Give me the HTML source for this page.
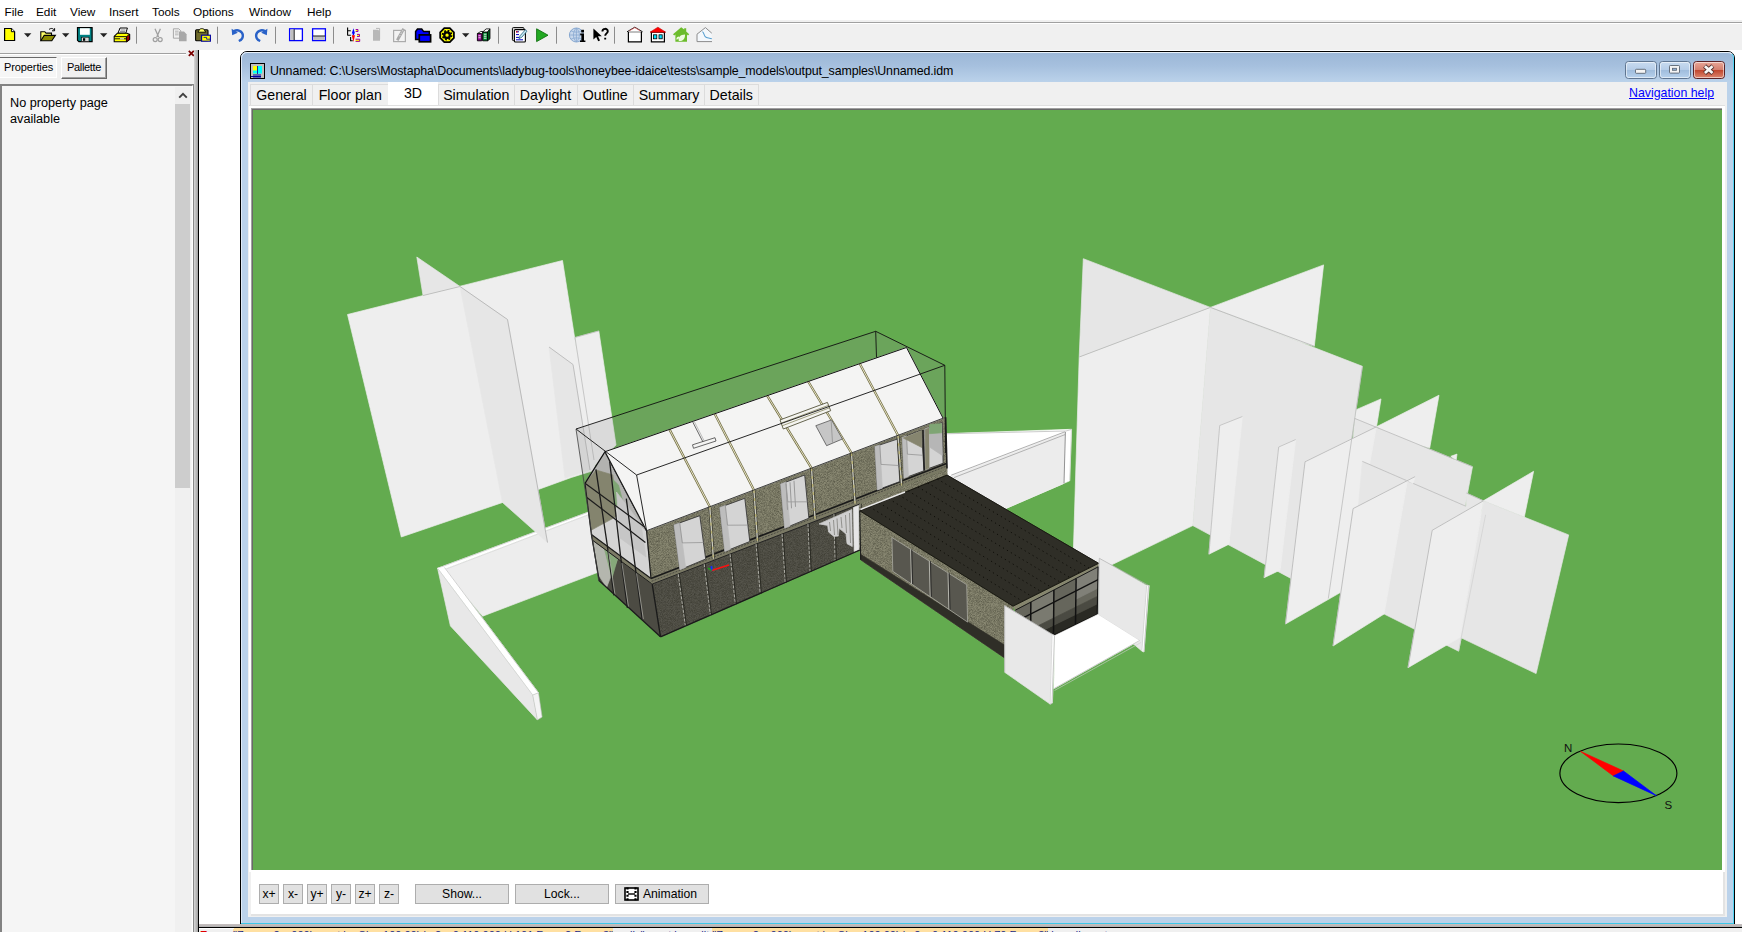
<!DOCTYPE html>
<html><head><meta charset="utf-8"><title>IDA ICE</title>
<style>
*{box-sizing:border-box;margin:0;padding:0}
html,body{width:1742px;height:932px;overflow:hidden;background:#fff}
body{position:relative;font-family:"Liberation Sans",sans-serif;color:#000}
.abs{position:absolute}
#menubar{left:0;top:0;width:1742px;height:20px;background:#fff}
#menubar span{position:absolute;top:5px;font-size:11.8px;line-height:15px;white-space:nowrap}
#toolbar{left:0;top:20px;width:1742px;height:30px;background:#f0f0f0;border-top:2px solid #f0f0f0}
#toolbar:before{content:'';position:absolute;left:0;top:0;width:100%;height:1px;background:#a0a0a0}
#toolbar:after{content:'';position:absolute;left:0;top:1px;width:100%;height:1px;background:#fff}
#tbicons{left:0;top:21px;width:720px;height:29px}
#leftpanel{left:0;top:50px;width:194px;height:882px;background:#f0f0f0}
#lp-line{left:0;top:53px;width:186px;height:1px;background:#a0a0a0}
#lp-line2{left:0;top:54px;width:186px;height:1px;background:#fff}
#lp-x{left:188px;top:47px;font-size:9px;font-weight:bold;color:#7a0000;line-height:12px}
#tab-prop{left:-1px;top:57px;width:58px;height:21px;border:1px solid;border-color:#696969 #fff #fff #696969;background:#f6f6f6;font-size:11px;line-height:19px;padding-left:4px;white-space:nowrap;letter-spacing:-0.1px}
#tab-pal{left:61px;top:57px;width:46px;height:22px;border:1px solid;border-color:#fff #696969 #696969 #fff;box-shadow:inset -1px -1px 0 #a0a0a0;background:#f0f0f0;font-size:11px;line-height:18px;text-align:center;white-space:nowrap;letter-spacing:-0.35px}
#propbox{left:0;top:84px;width:194px;height:860px;border:2px solid;border-color:#828282 #fff #fff #828282;background:#f5f5f5}
#proptext{left:10px;top:95px;font-size:12.68px;line-height:16px;white-space:nowrap}
#sb{left:175px;top:87px;width:16px;height:845px;background:#f0f0f0}
#sb-thumb{left:175px;top:104px;width:15px;height:384px;background:#cdcdcd}
#split1{left:193px;top:84px;width:1px;height:848px;background:#8a8a8a}
#split2{left:194px;top:50px;width:4px;height:882px;background:linear-gradient(90deg,#d8d8d8,#a0a0a0)}
#split3{left:198px;top:50px;width:1px;height:882px;background:#000}
#mdi{left:199px;top:50px;width:1543px;height:874px;background:#fff;overflow:hidden}
#child{left:240px;top:51px;width:1495px;height:900px;border:1px solid #000;border-radius:7px 7px 0 0;background:#bbd2ea;overflow:hidden}
#titlegrad{left:0;top:0;width:1496px;height:31px;background:linear-gradient(180deg,#9bb6d6 0%,#a6c0de 45%,#bcd3eb 100%)}
#childhl{left:241px;top:52px;width:1493px;height:880px;border-left:1px solid #dfeaf6;border-top:1px solid #e8f0f9;border-right:1px solid #52d4f4;border-radius:6px 6px 0 0}
#title{left:270px;top:64px;font-size:12.4px;line-height:15px;white-space:nowrap;letter-spacing:-0.11px}
#client{left:248px;top:82px;width:1479px;height:835px;background:#f0f0f0}
.tab{position:absolute;top:84px;height:22px;border:1px solid #dcdcdc;border-bottom:none;font-size:14.2px;line-height:20px;text-align:center;white-space:nowrap;background:#f0f0f0}
#tab3d{position:absolute;left:388px;top:82px;width:50px;height:25px;background:#fff;font-size:14.2px;line-height:22px;text-align:center}
#navhelp{left:1629px;top:86px;font-size:12.35px;line-height:15px;color:#0000ff;text-decoration:underline;white-space:nowrap}
#vpline{left:249px;top:105px;width:1476px;height:1px;background:#e0e0e0}
#vpwhite{left:249px;top:106px;width:1476px;height:766px;background:#fff}
#vpborder{left:251px;top:108px;width:1471px;height:762px;border-left:1px solid #a0a0a0;border-top:1px solid #a0a0a0}
#vpborder2{left:252px;top:109px;width:1470px;height:761px;border-left:1px solid #696969;border-top:1px solid #696969;background:#63ab4f}
#bottombar{left:251px;top:872px;width:1474px;height:44px;background:#fff;border-right:2px solid #e3e3e3;border-bottom:2px solid #e3e3e3}
.btn{position:absolute;top:884px;height:20px;background:#e1e1e1;border:1px solid #adadad;font-size:12.2px;line-height:18px;text-align:center;white-space:nowrap}
#cyanline{left:241px;top:923px;width:1493px;height:1px;background:#3cc8ea}
#hsplit{left:199px;top:924px;width:1543px;height:3px;background:linear-gradient(180deg,#c8c0c0,#b0b0b0)}
#hsplit2{left:199px;top:927px;width:1543px;height:1px;background:#000}
#outpane{left:199px;top:928px;width:1543px;height:4px;background:#f0f0f0;overflow:hidden}
#outtext{position:absolute;left:1px;top:0.5px;font-size:11px;line-height:13px;white-space:nowrap;color:#1a2a8a}
#outtext .hl{background:#ffe0a2;padding-top:2px}
#outwhite{left:199px;top:928px;width:35px;height:1px;background:#fff}
#outtext .err{color:#e00000;font-weight:bold}
</style></head>
<body>
<div id="menubar" class="abs"><span style="left:4.5px">File</span><span style="left:36px">Edit</span><span style="left:70px">View</span><span style="left:109px">Insert</span><span style="left:152px">Tools</span><span style="left:193px">Options</span><span style="left:249px">Window</span><span style="left:307px">Help</span></div><div id="toolbar" class="abs"></div><svg id="tbicons" class="abs" width="720" height="29" viewBox="0 20.8 720 29"><path d="M4.6 28.300h6.8l3.2 3.2v8.800h-10z" fill="#ffff00" stroke="#000" stroke-width="1.2"/><path d="M11.4 28.300v3.2h3.2" fill="#fff" stroke="#000" stroke-width="1"/><path d="M24 33.100h7.4l-3.7 3.900z" fill="#222"/><path d="M40.8 40.5v-9h4l1.2 1.4h5.5v2.3" fill="#ffff66" stroke="#000" stroke-width="1.1"/><path d="M40.8 40.5l3.4-5.3h11.2l-3.6 5.3z" fill="#8c8c00" stroke="#000" stroke-width="1.1"/><path d="M49 29.3c2-1.7 4.5-1.2 5.4 0.9M54.6 28v2.6h-2.6" fill="none" stroke="#000" stroke-width="1"/><path d="M62 33.100h7.4l-3.7 3.900z" fill="#222"/><path d="M77.5 27.5h14.6v14h-13.2l-1.4-1.4z" fill="#008284" stroke="#000" stroke-width="1.2"/><rect x="80" y="28" width="9.8" height="6.6" fill="#fff"/><rect x="81.4" y="37" width="7.6" height="4.4" fill="#d8d8d8" stroke="#000" stroke-width="0.6"/><rect x="83" y="38" width="2.2" height="2.6" fill="#000"/><path d="M100 33.100h7.4l-3.7 3.900z" fill="#222"/><path d="M118 33l2-5.2h7.4l-1.6 5.2z" fill="#fff" stroke="#000" stroke-width="1"/><path d="M120.5 29.8h5M120 31.4h5" stroke="#555" stroke-width="0.7"/><path d="M114.2 36.2l3.2-3.2h9.6l2.6 1.2v5l-3 2.4h-12.4z" fill="#ffff00" stroke="#000" stroke-width="1.1"/><path d="M114.2 36.4h12.2v5M114.6 38.6h11.6" fill="none" stroke="#000" stroke-width="0.9"/><path d="M126.6 36.2l3-2v5l-3 2.4z" fill="#a00000" stroke="#000" stroke-width="0.8"/><path d="M120 38.6h4" stroke="#fff" stroke-width="1"/><path d="M136.5 26.5v17" stroke="#8c8c8c" stroke-width="1"/><path d="M155 28.5l3.6 8.4M160.4 28.5l-3.6 8.4" stroke="#a0a0a0" stroke-width="1.3" fill="none"/><circle cx="155.2" cy="39.4" r="2" fill="none" stroke="#a0a0a0" stroke-width="1.2"/><circle cx="160.2" cy="39.4" r="2" fill="none" stroke="#a0a0a0" stroke-width="1.2"/><path d="M173.4 28.6h5.4l2 2v7.4h-7.4z" fill="#f0f0f0" stroke="#a8a8a8" stroke-width="1"/><path d="M175 31h3.6M175 32.8h3.6M175 34.6h3.6" stroke="#a8a8a8" stroke-width="0.8"/><path d="M179 31.4h5l2.6 2.6v7h-7.6z" fill="#a8a8a8"/><rect x="195.6" y="29.6" width="12.4" height="11" rx="1" fill="#6e6a2a" stroke="#000" stroke-width="1.1"/><path d="M199 30.4c0-2.6 5.6-2.6 5.6 0l1.2 1.6h-8z" fill="#ffff66" stroke="#000" stroke-width="0.9"/><rect x="201.6" y="35" width="8.8" height="6" fill="#ffff00" stroke="#0000a0" stroke-width="1.1"/><path d="M203.6 37.2h3v1.800h4" fill="none" stroke="#0000a0" stroke-width="0.8"/><path d="M217.5 26.5v17" stroke="#8c8c8c" stroke-width="1"/><path d="M233.6 31.2c4-2.4 8.6-0.4 9.2 3.4c0.4 3-1.6 5.2-4 6.2" fill="none" stroke="#2a62c8" stroke-width="2.4"/><path d="M231.6 28.6l0.6 6.4l5.6-2.4z" fill="#2a62c8"/><path d="M265.4 31.2c-4-2.4-8.6-0.4-9.2 3.4c-0.4 3 1.6 5.2 4 6.2" fill="none" stroke="#2a62c8" stroke-width="2.4"/><path d="M267.4 28.6l-0.6 6.4l-5.6-2.4z" fill="#2a62c8"/><path d="M275.5 26.5v17" stroke="#8c8c8c" stroke-width="1"/><rect x="289.6" y="28.6" width="12.8" height="11.8" fill="#fff" stroke="#0000ff" stroke-width="1.3"/><rect x="290.3" y="29.3" width="3.6" height="10.4" fill="#c0c0c0"/><path d="M294.2 29v11" stroke="#000" stroke-width="0.9"/><rect x="312.6" y="28.6" width="12.8" height="11.8" fill="#fff" stroke="#0000ff" stroke-width="1.3"/><rect x="313.3" y="36" width="11.4" height="3.7" fill="#c0c0c0"/><path d="M313 35.8h12" stroke="#000" stroke-width="0.9"/><path d="M333.5 26.5v17" stroke="#8c8c8c" stroke-width="1"/><path d="M347.6 27.4v7.800M347.6 30.5h3.2M347.6 35.100h3.200M350.600 36.700v3.900h2.200" fill="none" stroke="#000" stroke-width="1.1"/><path d="M353.4 28l1.600 5.400h-3.200z" fill="#0000ff"/><rect x="352.700" y="32" width="1.400" height="3.200" fill="#0000ff"/><path d="M351.800 35.100h3.200l-1.600 6.700z" fill="#ff0000"/><path d="M355.700 29.300h2.300v2h-2.300M357 34.200h2.500v2.100h-2.500M355.600 39h4.100v2.200h-4.100" fill="#ffff00" stroke="#a000a0" stroke-width="1"/><path d="M373 29.6h5l2 1.4v9.6h-7z" fill="#b8b8b8"/><path d="M376 28.2h3.6v11" fill="none" stroke="#b8b8b8" stroke-width="1"/><rect x="393.600" y="30.200" width="11.800" height="11.200" fill="#f2f2f2" stroke="#ababab" stroke-width="1.2"/><path d="M397.300 40.100L403.700 28.600" stroke="#a8a8a8" stroke-width="2.800"/><path d="M399.500 36.100L402.900 30" stroke="#e8e8e8" stroke-width="0.900" stroke-dasharray="1.4 1.400"/><path d="M415.600 39.400v-8l1.900-2.600h4.200l2 2.600h5.600v8z" fill="#0000ff" stroke="#000" stroke-width="1.500"/><rect x="419.300" y="34.700" width="11.300" height="6.900" fill="#0000ff" stroke="#000" stroke-width="1.700"/><path d="M444.300 28h5.500l4.100 4.100v5.700l-4.100 4.100h-5.500l-4.100-4.100v-5.700z" fill="#ffff00" stroke="#000" stroke-width="1.800"/><circle cx="447.050" cy="34.950" r="4.400" fill="none" stroke="#000" stroke-width="1.900" stroke-dasharray="1.750 1.706"/><circle cx="447.050" cy="34.950" r="2.800" fill="none" stroke="#000" stroke-width="2.300"/><path d="M462 33.100h7.4l-3.7 3.900z" fill="#222"/><path d="M477.400 33.300h4.300v7.300h-4.300z" fill="#900090" stroke="#000" stroke-width="0.900"/><path d="M477.400 33.300l3.400-2h4.300l-3.400 2z" fill="#fff" stroke="#000" stroke-width="0.800"/><path d="M481.700 33.300l1-0.600v7.900h-1z" fill="#600060"/><path d="M482.700 31.800h4.900v8.800h-4.900z" fill="#008830" stroke="#000" stroke-width="0.900"/><path d="M482.700 31.800l3.400-3.100h3.900l-2.400 3.100z" fill="#fff" stroke="#000" stroke-width="0.800"/><path d="M487.600 31.800l2.400-3.100v9.900l-2.400 2z" fill="#006020" stroke="#000" stroke-width="0.800"/><path d="M478.400 35.600h2.300M478.400 37.600h2.300M483.800 34h2.700M483.800 36h2.700M483.800 38h2.700" stroke="#fff" stroke-width="0.900"/><path d="M498.5 26.5v17" stroke="#8c8c8c" stroke-width="1"/><rect x="512.400" y="27.400" width="11.600" height="13" rx="1" fill="#d8d8d8" stroke="#000" stroke-width="1"/><rect x="514.400" y="29.400" width="11" height="12.400" rx="1" fill="#fff" stroke="#000" stroke-width="1.1"/><path d="M516 31.600h3M516 34.400h3M516 37.200h3M516 39.600h7" stroke="#0000c0" stroke-width="1"/><path d="M516 31.600h1.600" stroke="#e00000" stroke-width="1.2"/><path d="M519 38.400l1-2.800l5.400-6l1.600 1.400l-5.400 6.200z" fill="#c8e8f0" stroke="#206080" stroke-width="0.8"/><path d="M536.600 28.600v12.800l11.400-6.400z" fill="#22a822" stroke="#107010" stroke-width="0.9"/><path d="M556.5 26.5v17" stroke="#8c8c8c" stroke-width="1"/><circle cx="576.400" cy="34.800" r="7" fill="#c8d8ec" stroke="#88a8d0" stroke-width="1"/><path d="M569.400 34.800h14M576.400 27.800v14M571 30.600c3.400 1.800 7.400 1.800 10.800 0M571 39c3.400-1.800 7.400-1.800 10.800 0M576.400 27.800c-4 4-4 10 0 14M576.400 27.800c4 4 4 10 0 14" fill="none" stroke="#88a8d0" stroke-width="0.8"/><path d="M580.200 33.200h3.800v7h1.400v1.600h-5.400v-1.600h1.400v-5.200h-1.200z" fill="#000"/><rect x="581.200" y="29.600" width="2.800" height="2.600" fill="#000"/><path d="M593.400 28.400v11l2.800-2.600l2 4.200l1.800-0.800l-2-4.200h3.800z" fill="#000"/><path d="M602.400 31.200c0-3.400 5.400-3.400 5.400-0.200c0 2.200-2.600 2.200-2.600 4.600M605.200 37.600v1.800" fill="none" stroke="#000" stroke-width="1.9"/><path d="M614.5 26.5v17" stroke="#8c8c8c" stroke-width="1"/><path d="M628.400 31.400h13v10.200h-13z" fill="#fff" stroke="#000" stroke-width="1.2"/><path d="M627 31.600l7.800-4.600l7.800 4.600" fill="#fff" stroke="#000" stroke-width="0.9"/><path d="M629.400 30.600l5.400-3.200l5.400 3.200" fill="none" stroke="#e06060" stroke-width="0.8"/><path d="M651.400 32h13v9.600h-13z" fill="#fff" stroke="#000" stroke-width="1.2"/><path d="M650 32l7.900-5l7.900 5z" fill="#ff0000" stroke="#c00000" stroke-width="0.6"/><rect x="653.600" y="34.600" width="3.200" height="4" fill="#00e0ff" stroke="#000" stroke-width="0.8"/><rect x="659" y="34.600" width="3.200" height="4" fill="#00e0ff" stroke="#000" stroke-width="0.8"/><path d="M673 34l8.200-7l3 2.400v-1.400h2v3.200l3 2.800l-1.200 1.200l-1-0.800v7.200h-11.600v-7.200l-1.200 0.800z" fill="#6cbc2c"/><path d="M678.800 40.800c-1-4 1.600-6.400 6.200-6.600c0.200 4.200-1.800 6.800-6.200 6.600z" fill="#eefae0"/><path d="M676.400 39.600c-0.200-2 1-3.200 2.800-3.200c0 1.600-0.800 3-2.800 3.200z" fill="#eefae0"/><path d="M697 41.400v-7.400l8.400-6.600l6.400 5.600v8.400z" fill="#f4f8fc"/><path d="M697 41.400v-7.400l8.400-6.600l6.400 5.600M697 41.400h15" fill="none" stroke="#8c8c8c" stroke-width="1"/><path d="M702.400 31.400c1.600 1 1.400 3.400 2.800 5c1.400 1.600 4 1 6.600 2.200" fill="none" stroke="#5aa0d0" stroke-width="1.1"/></svg><div id="leftpanel" class="abs"></div><div id="lp-line" class="abs"></div><div id="lp-line2" class="abs"></div><svg class="abs" style="left:188px;top:50px" width="7" height="7" viewBox="0 0 7 7"><path d="M0.8 0.8l5 5M5.8 0.8l-5 5" stroke="#7a0000" stroke-width="1.7"/></svg><div id="tab-prop" class="abs">Properties</div><div id="tab-pal" class="abs">Pallette</div><div id="propbox" class="abs"></div><div id="sb" class="abs"></div><div id="sb-thumb" class="abs"></div><svg class="abs" style="left:177px;top:91px" width="12" height="8" viewBox="0 0 12 8"><path d="M2.2 6.600L6 2.800L9.800 6.600" fill="none" stroke="#404040" stroke-width="1.9"/></svg><div id="proptext" class="abs">No property page<br>available</div><div id="split1" class="abs"></div><div id="split2" class="abs"></div><div id="split3" class="abs"></div><div id="mdi" class="abs"></div><div id="child" class="abs"><div id="titlegrad" class="abs"></div></div><div id="childhl" class="abs"></div><svg class="abs" style="left:250px;top:62.5px" width="15" height="16" viewBox="0 0 15 16"><rect x="0.5" y="0.5" width="14" height="15" fill="#c0c0c0" stroke="#000"/><rect x="3" y="3" width="4.5" height="7.5" fill="#ffff00"/><rect x="7.5" y="3" width="4.5" height="7.5" fill="#00ffff"/><rect x="3" y="7.5" width="4.5" height="3" fill="#00ffff"/><path d="M7.5 3v8" stroke="#0000a0" stroke-width="0.8"/><path d="M1 13.5h10M4 11v4.5M6 11v4.5M8 11v4.5M10 11v4.5" stroke="#0000a0" stroke-width="1"/></svg><div id="title" class="abs">Unnamed: C:\Users\Mostapha\Documents\ladybug-tools\honeybee-idaice\tests\sample_models\output_samples\Unnamed.idm</div><svg class="abs" style="left:1624px;top:60px" width="104" height="21" viewBox="0 0 104 21"><defs><linearGradient id="cb" x1="0" y1="0" x2="0" y2="1"><stop offset="0" stop-color="#c9dcf0"/><stop offset="0.48" stop-color="#b6cde8"/><stop offset="0.5" stop-color="#9fbcdc"/><stop offset="1" stop-color="#b9d3ee"/></linearGradient><linearGradient id="cr" x1="0" y1="0" x2="0" y2="1"><stop offset="0" stop-color="#e9a99b"/><stop offset="0.48" stop-color="#d5806f"/><stop offset="0.5" stop-color="#c0442c"/><stop offset="1" stop-color="#dd8a73"/></linearGradient></defs><rect x="1.5" y="1.5" width="31" height="17" rx="3" fill="url(#cb)" stroke="#5f7590"/><rect x="2.5" y="2.5" width="29" height="15" rx="2" fill="none" stroke="rgba(255,255,255,0.55)"/><rect x="35.5" y="1.5" width="31" height="17" rx="3" fill="url(#cb)" stroke="#5f7590"/><rect x="36.5" y="2.5" width="29" height="15" rx="2" fill="none" stroke="rgba(255,255,255,0.55)"/><rect x="69.5" y="1.5" width="31" height="17" rx="3" fill="url(#cr)" stroke="#5a2226"/><rect x="70.5" y="2.5" width="29" height="15" rx="2" fill="none" stroke="rgba(255,255,255,0.55)"/> <rect x="11.5" y="9.3" width="10.2" height="4" rx="0.8" fill="#f4f4f4" stroke="#5a6470" stroke-width="0.9"/><rect x="45.5" y="5.5" width="10" height="7.6" rx="0.8" fill="#f4f4f4" stroke="#5a6470" stroke-width="0.9"/><rect x="48.5" y="8.3" width="4" height="2" fill="#8fb0d6" stroke="#5a6470" stroke-width="0.8"/><path d="M80.6 6l8.2 7.4M88.8 6l-8.2 7.4" stroke="#54302c" stroke-width="4.4"/><path d="M80.9 6.3l7.6 6.8M88.500 6.3l-7.600 6.8" stroke="#f8f8f8" stroke-width="2.7"/></svg><div id="client" class="abs"></div><div class="tab" style="left:250px;width:63px">General</div><div class="tab" style="left:312px;width:76.5px">Floor plan</div><div class="tab" style="left:438px;width:76.5px">Simulation</div><div class="tab" style="left:513.5px;width:64px">Daylight</div><div class="tab" style="left:576.5px;width:57.5px">Outline</div><div class="tab" style="left:633px;width:72px">Summary</div><div class="tab" style="left:704px;width:54.5px">Details</div><div id="tab3d">3D</div><div id="navhelp" class="abs">Navigation help</div><div id="vpline" class="abs"></div><div id="vpwhite" class="abs"></div><div id="vpborder" class="abs"></div><div id="vpborder2" class="abs"></div><svg class="abs" style="left:253px;top:110px" width="1469" height="760" viewBox="253 110 1469 760"><defs><filter id="tx" x="0" y="0" width="100%" height="100%" color-interpolation-filters="sRGB"><feTurbulence type="fractalNoise" baseFrequency="1.7" numOctaves="1" seed="7" result="n"/><feColorMatrix in="n" type="matrix" values="0 0 0 0 0.12  0 0 0 0 0.12  0 0 0 0 0.08  0.95 0 0 0 -0.33" result="a"/><feComposite in="a" in2="SourceGraphic" operator="in" result="spk"/><feMerge><feMergeNode in="SourceGraphic"/><feMergeNode in="spk"/></feMerge></filter></defs><rect x="253" y="109" width="1469" height="761" fill="#63ab4f"/><polygon points="443.5,569.6 590.5,513.6 600.0,571.5 482.6,616.2" fill="#ededed" stroke="#ededed" stroke-width="0.7" /><polygon points="437.6,568.3 590.0,511.5 590.5,513.6 443.5,569.6" fill="#ffffff" stroke="#ffffff" stroke-width="0.7" /><polyline points="437.6,568.3 590.0,511.5" fill="none" stroke="#c8c8c8" stroke-width="0.7" /><polyline points="443.5,570.0 590.5,514.0" fill="none" stroke="#cfcfcf" stroke-width="0.6" /><polygon points="437.6,568.3 532.7,695.0 537.4,719.9 450.4,625.9" fill="#e8e8e8" stroke="#e8e8e8" stroke-width="0.7" /><polygon points="437.6,568.3 444.5,567.5 538.5,692.8 532.7,695.0" fill="#ffffff" stroke="#ffffff" stroke-width="0.7" /><polyline points="444.5,567.5 538.5,692.8" fill="none" stroke="#c0c0c0" stroke-width="0.7" /><polyline points="437.6,568.3 532.7,695.0" fill="none" stroke="#c0c0c0" stroke-width="0.6" /><polygon points="532.7,695.0 538.5,692.8 542.1,717.1 537.4,719.9" fill="#f4f4f4" stroke="#c0c0c0" stroke-width="0.6" /><polygon points="575.0,337.5 598.8,331.0 616.0,445.0 590.0,470.0" fill="#eeeeee" stroke="#eeeeee" stroke-width="0.7" /><polygon points="416.8,257.0 460.0,286.5 423.0,295.5" fill="#e6e6e6" stroke="#e6e6e6" stroke-width="0.7" /><polygon points="347.5,314.5 562.5,260.5 595.4,470.0 571.3,477.5 502.5,502.5 401.3,537.0" fill="#eeeeee" stroke="#eeeeee" stroke-width="0.7" /><polygon points="549.0,347.0 573.0,364.5 590.0,470.0 565.0,478.0" fill="#e6e6e6" stroke="#e6e6e6" stroke-width="0.7" /><polyline points="549.0,347.0 573.0,364.5 590.0,470.0" fill="none" stroke="#b4b4b4" stroke-width="0.8" /><polyline points="575.0,337.5 598.8,331.0" fill="none" stroke="#b4b4b4" stroke-width="0.6" /><polyline points="575.0,337.5 594.0,460.0" fill="none" stroke="#b4b4b4" stroke-width="0.7" /><polygon points="460.0,286.5 507.5,319.5 547.5,542.5 502.5,502.5" fill="#e6e6e6" stroke="#e6e6e6" stroke-width="0.7" /><polyline points="423.0,295.5 460.0,286.5" fill="none" stroke="#b4b4b4" stroke-width="0.8" /><polyline points="460.0,286.5 507.5,319.5 547.5,542.5" fill="none" stroke="#b4b4b4" stroke-width="0.9" /><polygon points="1083.3,258.7 1210.4,307.4 1079.2,357.0" fill="#e6e6e6" stroke="#e6e6e6" stroke-width="0.7" /><polygon points="1079.2,357.0 1210.4,307.4 1192.8,525.6 1072.4,583.8" fill="#eeeeee" stroke="#eeeeee" stroke-width="0.7" /><polygon points="1210.4,307.4 1323.6,264.9 1314.3,346.2 1300.0,342.0" fill="#eeeeee" stroke="#eeeeee" stroke-width="0.7" /><polygon points="1210.4,307.4 1362.4,366.3 1328.3,598.5 1192.8,525.6" fill="#e6e6e6" stroke="#e6e6e6" stroke-width="0.7" /><polyline points="1079.2,357.0 1210.4,307.4" fill="none" stroke="#b4b4b4" stroke-width="0.8" /><polyline points="1210.4,307.4 1314.3,346.2" fill="none" stroke="#b4b4b4" stroke-width="0.8" /><polygon points="1219.7,425.5 1242.4,416.5 1229.0,544.2 1208.9,554.2" fill="#eeeeee" stroke="#eeeeee" stroke-width="0.7" /><polyline points="1208.9,554.2 1219.7,425.5 1242.4,416.5" fill="none" stroke="#b4b4b4" stroke-width="0.7" /><polygon points="1278.7,447.0 1295.7,439.5 1280.2,570.0 1264.1,577.7" fill="#eeeeee" stroke="#eeeeee" stroke-width="0.7" /><polyline points="1264.1,577.7 1278.7,447.0 1295.7,439.5" fill="none" stroke="#b4b4b4" stroke-width="0.7" /><polygon points="1356.2,409.7 1381.0,398.9 1376.0,430.0 1354.7,418.4" fill="#eeeeee" stroke="#eeeeee" stroke-width="0.7" /><polygon points="1376.4,426.8 1439.0,395.2 1429.7,448.1 1400.0,440.0" fill="#eeeeee" stroke="#eeeeee" stroke-width="0.7" /><polygon points="1354.7,418.4 1472.5,466.7 1455.0,560.0 1340.0,600.0" fill="#e6e6e6" stroke="#e6e6e6" stroke-width="0.7" /><polygon points="1450.8,456.3 1457.0,454.1 1456.0,461.0" fill="#eeeeee" stroke="#eeeeee" stroke-width="0.7" /><polygon points="1305.0,461.8 1376.4,426.8 1345.0,600.0 1340.7,592.3 1285.5,624.0" fill="#eeeeee" stroke="#eeeeee" stroke-width="0.7" /><polyline points="1285.5,624.0 1305.0,461.8 1376.4,426.8" fill="none" stroke="#b4b4b4" stroke-width="0.8" /><polyline points="1354.7,418.4 1472.5,466.7" fill="none" stroke="#b4b4b4" stroke-width="0.7" /><polyline points="1362.4,366.3 1328.3,598.5" fill="none" stroke="#b4b4b4" stroke-width="0.7" /><polygon points="1362.4,461.4 1485.6,514.8 1458.6,651.2 1384.1,614.0 1350.0,600.0" fill="#e6e6e6" stroke="#e6e6e6" stroke-width="0.7" /><polyline points="1362.4,461.4 1485.6,514.8" fill="none" stroke="#b4b4b4" stroke-width="0.7" /><polygon points="1353.1,508.6 1407.4,480.6 1384.1,614.0 1333.0,646.0" fill="#eeeeee" stroke="#eeeeee" stroke-width="0.7" /><polygon points="1407.4,480.6 1415.1,476.6 1413.0,483.5" fill="#eeeeee" stroke="#eeeeee" stroke-width="0.7" /><polyline points="1333.0,646.0 1353.1,508.6 1415.1,476.6" fill="none" stroke="#b4b4b4" stroke-width="0.8" /><polygon points="1466.3,493.0 1483.4,500.8 1466.0,511.0" fill="#e6e6e6" stroke="#e6e6e6" stroke-width="0.7" /><polygon points="1483.4,500.8 1533.6,471.3 1524.3,517.0" fill="#eeeeee" stroke="#eeeeee" stroke-width="0.7" /><polygon points="1483.4,500.8 1568.7,534.9 1536.1,673.6 1460.1,637.3" fill="#e6e6e6" stroke="#e6e6e6" stroke-width="0.7" /><polygon points="1432.2,530.3 1483.4,500.8 1460.1,637.3 1408.0,667.7" fill="#eeeeee" stroke="#eeeeee" stroke-width="0.7" /><polyline points="1408.0,667.7 1432.2,530.3 1483.4,500.8" fill="none" stroke="#b4b4b4" stroke-width="0.8" /><polyline points="1466.3,493.0 1483.4,500.8" fill="none" stroke="#b4b4b4" stroke-width="0.7" /><polyline points="1485.6,514.8 1458.6,651.2" fill="none" stroke="#d0d0d0" stroke-width="0.7" /><polygon points="946.0,433.6 1071.6,429.3 1069.7,480.8 1000.0,511.0 947.0,478.0" fill="#ffffff" stroke="#ffffff" stroke-width="0.7" /><polygon points="951.2,476.3 1065.2,432.6 1063.9,483.4 1000.0,511.0" fill="#ececec" stroke="#ececec" stroke-width="0.7" /><polyline points="951.2,475.2 1065.2,431.7" fill="none" stroke="#8e8e8e" stroke-width="0.7" /><polyline points="954.0,477.6 1065.0,434.6" fill="none" stroke="#9a9a9a" stroke-width="0.7" /><polyline points="946.0,433.8 1066.0,431.0 1071.6,429.4" fill="none" stroke="#b4b4b4" stroke-width="0.7" /><polyline points="1065.4,432.0 1064.0,483.4" fill="none" stroke="#7a7a7a" stroke-width="0.8" /><polyline points="1071.4,429.5 1069.7,480.8" fill="none" stroke="#c8c8c8" stroke-width="0.6" /><polygon points="576.0,429.0 875.7,331.3 944.8,365.3 946.0,470.0 860.0,550.0 661.3,637.5 598.8,581.3" fill="rgba(140,140,140,0.2)" /><polygon points="585.0,483.3 605.0,451.7 646.6,530.7 651.0,578.5 591.4,534.6" fill="#d4d4d4" stroke="#d4d4d4" stroke-width="0.7" /><polygon points="585.0,483.3 605.0,451.7 646.6,530.7" fill="#b2b2b0" stroke="#b2b2b0" stroke-width="0.7" /><polygon points="585.2,483.4 596.0,470.0 612.8,474.9 616.2,516.6 591.4,530.1" fill="#84846e" stroke="#84846e" stroke-width="0.7" /><polygon points="612.8,479.4 618.5,485.0 624.0,506.0 614.0,505.0" fill="#7fa574" stroke="#7fa574" stroke-width="0.7" /><polygon points="616.5,492.0 641.0,524.0 646.0,557.0 620.0,538.0" fill="#c6c6c6" stroke="#c6c6c6" stroke-width="0.7" /><polygon points="592.5,540.2 652.2,584.1 660.5,636.8 599.3,580.8" fill="#4c4b43" stroke="#4c4b43" stroke-width="0.7" /><polygon points="592.5,540.2 617.6,558.6 606.6,587.5 598.3,574.7" fill="#b4b6ae" stroke="#b4b6ae" stroke-width="0.7" /><polygon points="604.4,549.0 617.6,558.6 612.0,578.0" fill="#86a87a" stroke="#86a87a" stroke-width="0.7" /><polygon points="591.4,534.6 651.0,578.5 652.2,584.1 592.5,540.2" fill="#7c7b66" stroke="#7c7b66" stroke-width="0.7" /><polyline points="595.9,469.3 607.2,544.7 613.9,595.4" fill="none" stroke="#1c1c1c" stroke-width="1.3" /><polyline points="608.4,550.7 615.1,595.4" fill="none" stroke="#c8c8c0" stroke-width="0.6" /><polyline points="609.4,459.1 620.7,557.1 627.4,607.8" fill="none" stroke="#1c1c1c" stroke-width="1.3" /><polyline points="621.9,563.1 628.6,607.8" fill="none" stroke="#c8c8c0" stroke-width="0.6" /><polyline points="626.3,498.6 635.3,567.3 642.1,619.0" fill="none" stroke="#1c1c1c" stroke-width="1.3" /><polyline points="636.5,573.3 643.3,619.0" fill="none" stroke="#c8c8c0" stroke-width="0.6" /><polyline points="585.0,483.3 591.4,534.6 599.3,580.8" fill="none" stroke="#1c1c1c" stroke-width="1.2" /><polyline points="585.0,483.3 605.0,451.7 646.6,530.7" fill="none" stroke="#111" stroke-width="1.3" /><polyline points="585.0,483.3 644.3,526.7" fill="none" stroke="#1c1c1c" stroke-width="1.2" /><polyline points="586.9,497.4 645.4,542.5" fill="none" stroke="#1c1c1c" stroke-width="1.2" /><polyline points="591.4,534.6 651.0,578.5" fill="none" stroke="#1c1c1c" stroke-width="1.2" /><polyline points="592.5,540.2 652.2,584.1" fill="none" stroke="#1c1c1c" stroke-width="1.0" /><polyline points="599.3,580.8 660.5,636.8" fill="none" stroke="#1c1c1c" stroke-width="1.3" /><polygon points="646.6,530.7 943.1,418.2 945.6,417.2 946.5,463.5 651.0,578.5" fill="#888771" stroke="#888771" stroke-width="0.7" filter="url(#tx)"/><polygon points="652.2,582.6 859.5,503.0 860.0,550.0 660.5,636.8" fill="#55544b" stroke="#55544b" stroke-width="0.7" filter="url(#tx)"/><polygon points="859.5,504.0 947.0,468.5 947.1,476.0 859.8,511.5" fill="#888771" stroke="#888771" stroke-width="0.7" filter="url(#tx)"/><polygon points="651.0,578.5 946.5,463.5 947.0,468.5 860.0,503.5 652.2,584.1" fill="#7a7964" stroke="#7a7964" stroke-width="0.7" /><polyline points="651.0,578.5 946.5,463.5" fill="none" stroke="#1a1a1a" stroke-width="1.7" /><polyline points="652.2,584.1 860.0,504.0" fill="none" stroke="#222" stroke-width="1.0" /><polyline points="651.6,581.3 946.8,466.0" fill="none" stroke="#2a2a2a" stroke-width="0.6" stroke-dasharray="2 1.2"/><polygon points="605.0,451.7 906.5,347.5 943.1,418.2 646.6,530.7" fill="#f4f4f3" stroke="#f4f4f3" stroke-width="0.7" /><polygon points="674.0,524.9 699.8,515.7 705.7,559.0 679.9,569.8" fill="#d4d4d4" stroke="#3a3a3a" stroke-width="0.9" /><polygon points="674.0,524.9 679.7,522.9 685.6,567.4 679.9,569.8" fill="#bdbdbd" stroke="#bdbdbd" stroke-width="0.7" /><polyline points="679.7,522.9 682.3,542.9 703.5,542.5" fill="none" stroke="#8c8c8c" stroke-width="0.7" /><polygon points="719.8,507.4 744.8,498.3 749.8,541.5 724.8,551.5" fill="#d4d4d4" stroke="#3a3a3a" stroke-width="0.9" /><polygon points="719.8,507.4 725.3,505.4 730.3,549.3 724.8,551.5" fill="#bdbdbd" stroke="#bdbdbd" stroke-width="0.7" /><polyline points="725.3,505.4 727.5,525.2 747.9,525.1" fill="none" stroke="#8c8c8c" stroke-width="0.7" /><polygon points="780.6,484.1 804.7,475.0 808.9,518.2 784.7,528.2" fill="#d4d4d4" stroke="#3a3a3a" stroke-width="0.9" /><polygon points="780.6,484.1 785.9,482.1 790.0,526.0 784.7,528.2" fill="#bdbdbd" stroke="#bdbdbd" stroke-width="0.7" /><polyline points="785.9,482.1 787.8,501.9 807.3,501.8" fill="none" stroke="#8c8c8c" stroke-width="0.7" /><polygon points="874.9,446.6 897.3,439.1 899.8,481.6 877.4,489.9" fill="#d4d4d4" stroke="#3a3a3a" stroke-width="0.9" /><polygon points="874.9,446.6 879.8,445.0 882.3,488.1 877.4,489.9" fill="#bdbdbd" stroke="#bdbdbd" stroke-width="0.7" /><polyline points="879.8,445.0 881.0,464.4 898.8,465.5" fill="none" stroke="#8c8c8c" stroke-width="0.7" /><polygon points="902.3,437.5 921.5,430.0 924.0,470.8 904.0,478.2" fill="#d4d4d4" stroke="#3a3a3a" stroke-width="0.9" /><polygon points="902.3,437.5 906.5,435.9 908.4,476.6 904.0,478.2" fill="#bdbdbd" stroke="#bdbdbd" stroke-width="0.7" /><polyline points="906.5,435.9 907.4,454.2 923.0,455.3" fill="none" stroke="#8c8c8c" stroke-width="0.7" /><polygon points="924.8,429.1 942.3,422.5 943.1,463.3 924.8,469.9" fill="#d4d4d4" stroke="#3a3a3a" stroke-width="0.9" /><polygon points="924.8,429.1 928.6,427.6 928.8,468.4 924.8,469.9" fill="#bdbdbd" stroke="#bdbdbd" stroke-width="0.7" /><polyline points="928.6,427.6 928.7,446.0 942.8,447.8" fill="none" stroke="#8c8c8c" stroke-width="0.7" /><polyline points="786.0,483.8 787.5,509.8" fill="none" stroke="#9a9a9a" stroke-width="1" /><polyline points="790.0,482.3 791.5,508.3" fill="none" stroke="#9a9a9a" stroke-width="1" /><polyline points="794.0,480.8 795.5,506.8" fill="none" stroke="#9a9a9a" stroke-width="1" /><polygon points="903.3,438.0 921.8,430.6 921.8,447.5" fill="#86856f" stroke="#86856f" stroke-width="0.7" /><polygon points="925.2,429.6 929.0,428.0 929.0,468.0 925.6,469.4" fill="#86856f" stroke="#86856f" stroke-width="0.7" /><polygon points="929.5,433.7 941.7,432.8 942.2,455.4 929.5,447.0" fill="#b6b6b6" stroke="#b6b6b6" stroke-width="0.7" /><polygon points="929.5,424.6 941.7,423.6 941.7,432.8 929.5,433.7" fill="#7fa574" stroke="#7fa574" stroke-width="0.7" /><polyline points="922.9,430.0 924.3,470.5" fill="none" stroke="#222" stroke-width="1.6" /><polyline points="678.2,574.1 685.4,625.9" fill="none" stroke="#b8b8b0" stroke-width="0.9" stroke-dasharray="3 1.5"/><polyline points="679.4,574.1 686.6,625.9" fill="none" stroke="#26261f" stroke-width="0.9" /><polyline points="704.2,564.1 710.4,615.1" fill="none" stroke="#b8b8b0" stroke-width="0.9" stroke-dasharray="3 1.5"/><polyline points="705.4,564.1 711.6,615.1" fill="none" stroke="#26261f" stroke-width="0.9" /><polyline points="730.1,554.1 735.3,604.2" fill="none" stroke="#b8b8b0" stroke-width="0.9" stroke-dasharray="3 1.5"/><polyline points="731.3,554.1 736.5,604.2" fill="none" stroke="#26261f" stroke-width="0.9" /><polyline points="756.1,544.0 760.2,593.4" fill="none" stroke="#b8b8b0" stroke-width="0.9" stroke-dasharray="3 1.5"/><polyline points="757.3,544.0 761.5,593.4" fill="none" stroke="#26261f" stroke-width="0.9" /><polyline points="782.1,534.0 785.2,582.5" fill="none" stroke="#b8b8b0" stroke-width="0.9" stroke-dasharray="3 1.5"/><polyline points="783.3,534.0 786.4,582.5" fill="none" stroke="#26261f" stroke-width="0.9" /><polyline points="808.0,524.0 810.1,571.7" fill="none" stroke="#b8b8b0" stroke-width="0.9" stroke-dasharray="3 1.5"/><polyline points="809.2,524.0 811.3,571.7" fill="none" stroke="#26261f" stroke-width="0.9" /><polyline points="834.0,514.0 835.1,560.9" fill="none" stroke="#b8b8b0" stroke-width="0.9" stroke-dasharray="3 1.5"/><polyline points="835.2,514.0 836.3,560.9" fill="none" stroke="#26261f" stroke-width="0.9" /><polyline points="860.0,504.0 860.0,550.0" fill="none" stroke="#b8b8b0" stroke-width="0.9" stroke-dasharray="3 1.5"/><polyline points="861.2,504.0 861.2,550.0" fill="none" stroke="#26261f" stroke-width="0.9" /><polygon points="819.0,523.9 851.8,509.5 852.3,546.6 847.0,543.7 846.0,534.0 839.2,528.3 838.3,536.0 833.9,536.5 828.6,532.1 827.6,525.4" fill="#cfcfcf" stroke="#cfcfcf" stroke-width="0.7" /><polyline points="829.5,522.0 830.5,531.0" fill="none" stroke="#8a8a86" stroke-width="0.9" /><polyline points="833.5,520.0 834.5,535.0" fill="none" stroke="#8a8a86" stroke-width="0.9" /><polyline points="837.0,518.5 838.0,535.0" fill="none" stroke="#8a8a86" stroke-width="0.9" /><polyline points="841.0,517.0 842.0,528.0" fill="none" stroke="#8a8a86" stroke-width="0.9" /><polyline points="845.5,515.0 846.5,533.0" fill="none" stroke="#8a8a86" stroke-width="0.9" /><polyline points="849.5,513.0 850.5,543.0" fill="none" stroke="#8a8a86" stroke-width="0.9" /><polygon points="853.5,507.5 858.6,505.5 858.9,549.5 854.2,551.5" fill="#e6e6e6" stroke="#e6e6e6" stroke-width="0.7" /><polyline points="660.5,636.8 860.0,550.0" fill="none" stroke="#1a1a1a" stroke-width="1.3" /><polyline points="646.6,530.7 651.0,578.5" fill="none" stroke="#1a1a1a" stroke-width="1.2" /><polyline points="652.2,584.1 660.5,636.8" fill="none" stroke="#1a1a1a" stroke-width="1.3" /><polyline points="669.5,429.4 709.8,506.7" fill="none" stroke="#6e6a40" stroke-width="2.3" /><polyline points="669.5,429.4 709.8,506.7" fill="none" stroke="#f4f0d4" stroke-width="0.9" /><polyline points="709.8,506.7 713.4,558.7" fill="none" stroke="#3c3c32" stroke-width="2.8" /><polyline points="709.8,506.7 713.4,558.7" fill="none" stroke="#cbcbbf" stroke-width="1.3" /><polyline points="709.8,506.7 713.4,558.7" fill="none" stroke="#b8b070" stroke-width="1.3" stroke-dasharray="3 5"/><polyline points="714.7,413.8 753.9,490.0" fill="none" stroke="#6e6a40" stroke-width="2.3" /><polyline points="714.7,413.8 753.9,490.0" fill="none" stroke="#f4f0d4" stroke-width="0.9" /><polyline points="753.9,490.0 757.5,541.5" fill="none" stroke="#3c3c32" stroke-width="2.8" /><polyline points="753.9,490.0 757.5,541.5" fill="none" stroke="#cbcbbf" stroke-width="1.3" /><polyline points="753.9,490.0 757.5,541.5" fill="none" stroke="#b8b070" stroke-width="1.3" stroke-dasharray="3 5"/><polyline points="767.2,395.6 811.5,468.1" fill="none" stroke="#6e6a40" stroke-width="2.3" /><polyline points="767.2,395.6 811.5,468.1" fill="none" stroke="#f4f0d4" stroke-width="0.9" /><polyline points="811.5,468.1 815.1,519.2" fill="none" stroke="#3c3c32" stroke-width="2.8" /><polyline points="811.5,468.1 815.1,519.2" fill="none" stroke="#cbcbbf" stroke-width="1.3" /><polyline points="811.5,468.1 815.1,519.2" fill="none" stroke="#b8b070" stroke-width="1.3" stroke-dasharray="3 5"/><polyline points="808.2,381.5 851.5,453.0" fill="none" stroke="#6e6a40" stroke-width="2.3" /><polyline points="808.2,381.5 851.5,453.0" fill="none" stroke="#f4f0d4" stroke-width="0.9" /><polyline points="851.5,453.0 855.1,503.6" fill="none" stroke="#3c3c32" stroke-width="2.8" /><polyline points="851.5,453.0 855.1,503.6" fill="none" stroke="#cbcbbf" stroke-width="1.3" /><polyline points="851.5,453.0 855.1,503.6" fill="none" stroke="#b8b070" stroke-width="1.3" stroke-dasharray="3 5"/><polyline points="859.8,363.7 898.0,435.3" fill="none" stroke="#6e6a40" stroke-width="2.3" /><polyline points="859.8,363.7 898.0,435.3" fill="none" stroke="#f4f0d4" stroke-width="0.9" /><polyline points="898.0,435.3 901.6,485.5" fill="none" stroke="#3c3c32" stroke-width="2.8" /><polyline points="898.0,435.3 901.6,485.5" fill="none" stroke="#cbcbbf" stroke-width="1.3" /><polyline points="898.0,435.3 901.6,485.5" fill="none" stroke="#b8b070" stroke-width="1.3" stroke-dasharray="3 5"/><polyline points="646.6,530.7 943.1,418.2" fill="none" stroke="#2a2a2a" stroke-width="0.9" /><polyline points="605.0,451.7 906.5,347.5 943.1,418.2" fill="none" stroke="#111" stroke-width="1" /><polyline points="605.0,451.7 646.6,530.7" fill="none" stroke="#111" stroke-width="1.1" /><polygon points="815.8,425.7 831.6,419.9 842.4,439.0 826.6,445.7" fill="#c6c6c6" stroke="#555" stroke-width="0.8" /><polyline points="831.2,421.0 832.5,442.5" fill="none" stroke="#8a8a8a" stroke-width="0.7" /><polygon points="780.0,419.9 827.4,402.4 830.7,410.7 783.3,429.0" fill="#f4f4f0" stroke="#55543c" stroke-width="0.9" /><polyline points="781.2,423.1 828.6,405.3" fill="none" stroke="#7a7850" stroke-width="0.7" /><polyline points="782.1,425.8 829.5,407.8" fill="none" stroke="#7a7850" stroke-width="0.7" /><polygon points="692.5,444.8 715.0,437.7 716.0,441.0 693.5,448.3" fill="#f4f4f3" stroke="#444" stroke-width="0.8" /><polyline points="692.5,421.5 703.0,442.0" fill="none" stroke="#444" stroke-width="0.8" /><polyline points="694.0,421.0 704.5,441.5" fill="none" stroke="#999" stroke-width="0.6" /><polyline points="711.5,570.5 729.0,565.0" fill="none" stroke="#ff1010" stroke-width="1.6" /><polyline points="711.5,570.5 711.5,566.0" fill="none" stroke="#1030ff" stroke-width="1.8" /><polyline points="711.5,570.5 708.0,568.0" fill="none" stroke="#10b010" stroke-width="1.3" /><polyline points="636.6,475.0 576.0,429.0 875.7,331.3 944.8,365.3 636.6,475.0" fill="none" stroke="#101010" stroke-width="0.9" /><polyline points="636.6,475.0 646.6,530.7" fill="none" stroke="#101010" stroke-width="0.9" /><polyline points="944.8,365.3 945.6,453.0" fill="none" stroke="#101010" stroke-width="0.9" /><polyline points="875.7,331.3 876.5,357.5" fill="none" stroke="#101010" stroke-width="0.9" /><polyline points="576.0,429.0 598.8,581.3" fill="none" stroke="#404040" stroke-width="0.8" /><polyline points="945.6,417.2 947.0,468.5" fill="none" stroke="#1a1a1a" stroke-width="1.6" /><polygon points="859.8,510.8 1013.0,606.1 1013.5,664.0 860.7,559.8" fill="#888771" stroke="#888771" stroke-width="0.7" filter="url(#tx)"/><polygon points="860.7,554.4 1013.3,650.6 1013.5,664.0 860.7,559.8" fill="#2f2e27" stroke="#2f2e27" stroke-width="0.7" /><polygon points="891.9,537.5 966.7,584.7 967.6,622.1 892.8,571.3" fill="#58574f" stroke="#a8a8a0" stroke-width="0.8" /><polyline points="910.6,549.3 911.5,584.0" fill="none" stroke="#b4b4ac" stroke-width="1.0" /><polyline points="911.8,549.3 912.7,584.0" fill="none" stroke="#222" stroke-width="0.8" /><polyline points="929.3,561.1 930.2,596.7" fill="none" stroke="#b4b4ac" stroke-width="1.0" /><polyline points="930.5,561.1 931.4,596.7" fill="none" stroke="#222" stroke-width="0.8" /><polyline points="948.0,572.9 948.9,609.4" fill="none" stroke="#b4b4ac" stroke-width="1.0" /><polyline points="949.2,572.9 950.1,609.4" fill="none" stroke="#222" stroke-width="0.8" /><polyline points="859.8,510.8 860.7,559.8" fill="none" stroke="#1a1a1a" stroke-width="1" /><polygon points="1013.0,606.1 1098.5,563.3 1098.3,566.8 1015.3,610.2" fill="#86866e" stroke="#86866e" stroke-width="0.7" /><polygon points="1015.3,610.2 1098.3,566.8 1097.4,614.3 1015.3,653.5" fill="#66665c" stroke="#66665c" stroke-width="0.7" /><polygon points="1031.1,602.0 1053.5,590.2 1053.1,635.5 1030.9,646.1" fill="#7a7a70" stroke="#7a7a70" stroke-width="0.7" /><polygon points="1075.9,578.5 1098.3,566.8 1097.9,588.2 1075.6,599.4" fill="#808078" stroke="#808078" stroke-width="0.7" /><polygon points="1015.3,644.0 1097.6,603.8 1097.4,614.3 1015.3,653.5" fill="#2a2a24" stroke="#2a2a24" stroke-width="0.7" /><polygon points="1015.3,637.0 1097.7,596.2 1097.6,603.8 1015.3,644.0" fill="#4a4a42" stroke="#4a4a42" stroke-width="0.7" /><polyline points="1030.8,602.1 1030.7,646.2" fill="none" stroke="#111" stroke-width="1.5" /><polyline points="1053.9,590.0 1053.5,635.3" fill="none" stroke="#111" stroke-width="1.5" /><polyline points="1076.1,578.4 1075.5,624.8" fill="none" stroke="#111" stroke-width="1.5" /><polyline points="1098.3,566.8 1097.4,614.3" fill="none" stroke="#111" stroke-width="1.5" /><polyline points="1015.3,621.9 1098.1,579.6" fill="none" stroke="#111" stroke-width="1.3" /><polyline points="1015.3,610.2 1098.3,566.8" fill="none" stroke="#111" stroke-width="0.9" /><polyline points="1015.3,653.5 1097.4,614.3" fill="none" stroke="#111" stroke-width="1.2" /><polygon points="1054.9,634.6 1097.4,614.3 1097.8,618.5 1055.2,639.0" fill="#22211c" stroke="#22211c" stroke-width="0.7" /><polygon points="859.8,510.8 947.1,475.1 1098.5,563.3 1013.0,606.1" fill="#2f2e27" stroke="#2f2e27" stroke-width="0.7" /><polyline points="869.5,506.8 1022.5,601.3" fill="none" stroke="#0e0d08" stroke-width="1.0" stroke-dasharray="1.2 3.4"/><polyline points="879.2,502.9 1032.0,596.6" fill="none" stroke="#0e0d08" stroke-width="1.0" stroke-dasharray="1.2 3.4"/><polyline points="888.9,498.9 1041.5,591.8" fill="none" stroke="#0e0d08" stroke-width="1.0" stroke-dasharray="1.2 3.4"/><polyline points="898.6,494.9 1051.0,587.1" fill="none" stroke="#0e0d08" stroke-width="1.0" stroke-dasharray="1.2 3.4"/><polyline points="908.3,491.0 1060.5,582.3" fill="none" stroke="#0e0d08" stroke-width="1.0" stroke-dasharray="1.2 3.4"/><polyline points="918.0,487.0 1070.0,577.6" fill="none" stroke="#0e0d08" stroke-width="1.0" stroke-dasharray="1.2 3.4"/><polyline points="927.7,483.0 1079.5,572.8" fill="none" stroke="#0e0d08" stroke-width="1.0" stroke-dasharray="1.2 3.4"/><polyline points="937.4,479.1 1089.0,568.1" fill="none" stroke="#0e0d08" stroke-width="1.0" stroke-dasharray="1.2 3.4"/><polyline points="859.8,510.8 947.1,475.1 1098.5,563.3 1013.0,606.1 859.8,510.8" fill="none" stroke="#15140f" stroke-width="0.9" /><polyline points="860.5,509.5 905.0,492.0" fill="none" stroke="#e8e8e8" stroke-width="1.4" /><polygon points="1099.3,558.3 1146.6,585.4 1141.8,651.0 1098.3,614.3" fill="#e8e8e8" stroke="#e8e8e8" stroke-width="0.7" /><polygon points="1146.6,585.4 1149.2,585.6 1144.0,652.0 1141.8,651.0" fill="#ffffff" stroke="#ffffff" stroke-width="0.7" /><polyline points="1099.3,558.3 1148.5,585.4 1144.0,652.0" fill="none" stroke="#b0b0b0" stroke-width="0.7" /><polyline points="1146.6,585.4 1141.8,651.0" fill="none" stroke="#c0c0c0" stroke-width="0.6" /><polyline points="1099.3,558.3 1098.5,614.0" fill="none" stroke="#b0b0b0" stroke-width="0.6" /><polygon points="1054.9,635.6 1098.3,614.3 1139.8,640.4 1053.9,688.7" fill="#ffffff" stroke="#ffffff" stroke-width="0.7" /><polyline points="1053.9,688.7 1139.8,640.4" fill="none" stroke="#b8b8b8" stroke-width="0.7" /><polyline points="1054.5,690.5 1141.0,642.5" fill="none" stroke="#d0d0d0" stroke-width="0.6" /><polyline points="1098.3,614.3 1139.8,640.4" fill="none" stroke="#d0d0d0" stroke-width="0.6" /><polygon points="1004.7,605.7 1053.9,635.6 1050.1,704.1 1004.7,672.3" fill="#e8e8e8" stroke="#e8e8e8" stroke-width="0.7" /><polygon points="1052.0,634.5 1055.0,635.6 1052.4,703.0 1050.1,704.1" fill="#ffffff" stroke="#ffffff" stroke-width="0.7" /><polyline points="1004.7,672.3 1004.7,605.7 1054.5,635.6 1052.0,703.5 1050.1,704.1" fill="none" stroke="#b0b0b0" stroke-width="0.7" /><polyline points="1052.0,635.0 1050.1,704.1" fill="none" stroke="#c4c4c4" stroke-width="0.6" /><ellipse cx="1618.4" cy="773.3" rx="58.5" ry="29.3" fill="none" stroke="#000" stroke-width="1.15"/><polygon points="1580.6,751.4 1623.5,771.0 1613.4,775.9" fill="#ff0000" stroke="#ff0000" stroke-width="0.7" /><polygon points="1623.5,771.0 1656.4,795.7 1613.4,775.9" fill="#0000ff" stroke="#0000ff" stroke-width="0.7" /><text x="1564" y="751.8" font-family="Liberation Sans, sans-serif" font-size="11.5" fill="#111">N</text><text x="1664.5" y="808.8" font-family="Liberation Sans, sans-serif" font-size="11.5" fill="#111">S</text></svg><div id="bottombar" class="abs"></div><div class="btn" style="left:259px;width:20px">x+</div><div class="btn" style="left:283px;width:20px">x-</div><div class="btn" style="left:307px;width:20px">y+</div><div class="btn" style="left:331px;width:20px">y-</div><div class="btn" style="left:355px;width:20px">z+</div><div class="btn" style="left:379px;width:20px">z-</div><div class="btn" style="left:415px;width:94px">Show...</div><div class="btn" style="left:515px;width:94px">Lock...</div><div class="btn" style="left:615px;width:94px;padding-left:16px">Animation</div><svg class="abs" style="left:624px;top:887px" width="15" height="14" viewBox="0 0 15 14"><rect x="1" y="1" width="13" height="12" fill="#fff" stroke="#000" stroke-width="1.6"/><path d="M3.5 0.5v13M11.5 0.5v13" stroke="#000" stroke-width="2.2" stroke-dasharray="2 1.6"/><path d="M4 7h7" stroke="#000" stroke-width="1.4"/></svg><div id="cyanline" class="abs"></div><div id="hsplit" class="abs"></div><div id="hsplit2" class="abs"></div><div id="outpane" class="abs"><div id="outtext"><span class="err">Error</span>&nbsp;&nbsp;<span class="hl">"Zones: 2 x 000) must be Size 100.00) in 2 x 0.110.000 U 101 Form 2 Form 3"</span> walls" must be split <span class="hl">"Zones: 2 x 000) must be Size 100.00) in 2 x 0.110.000 U 70 Form 3"</span> by adjacent zones</div></div><div id="outwhite" class="abs"></div>
</body></html>
